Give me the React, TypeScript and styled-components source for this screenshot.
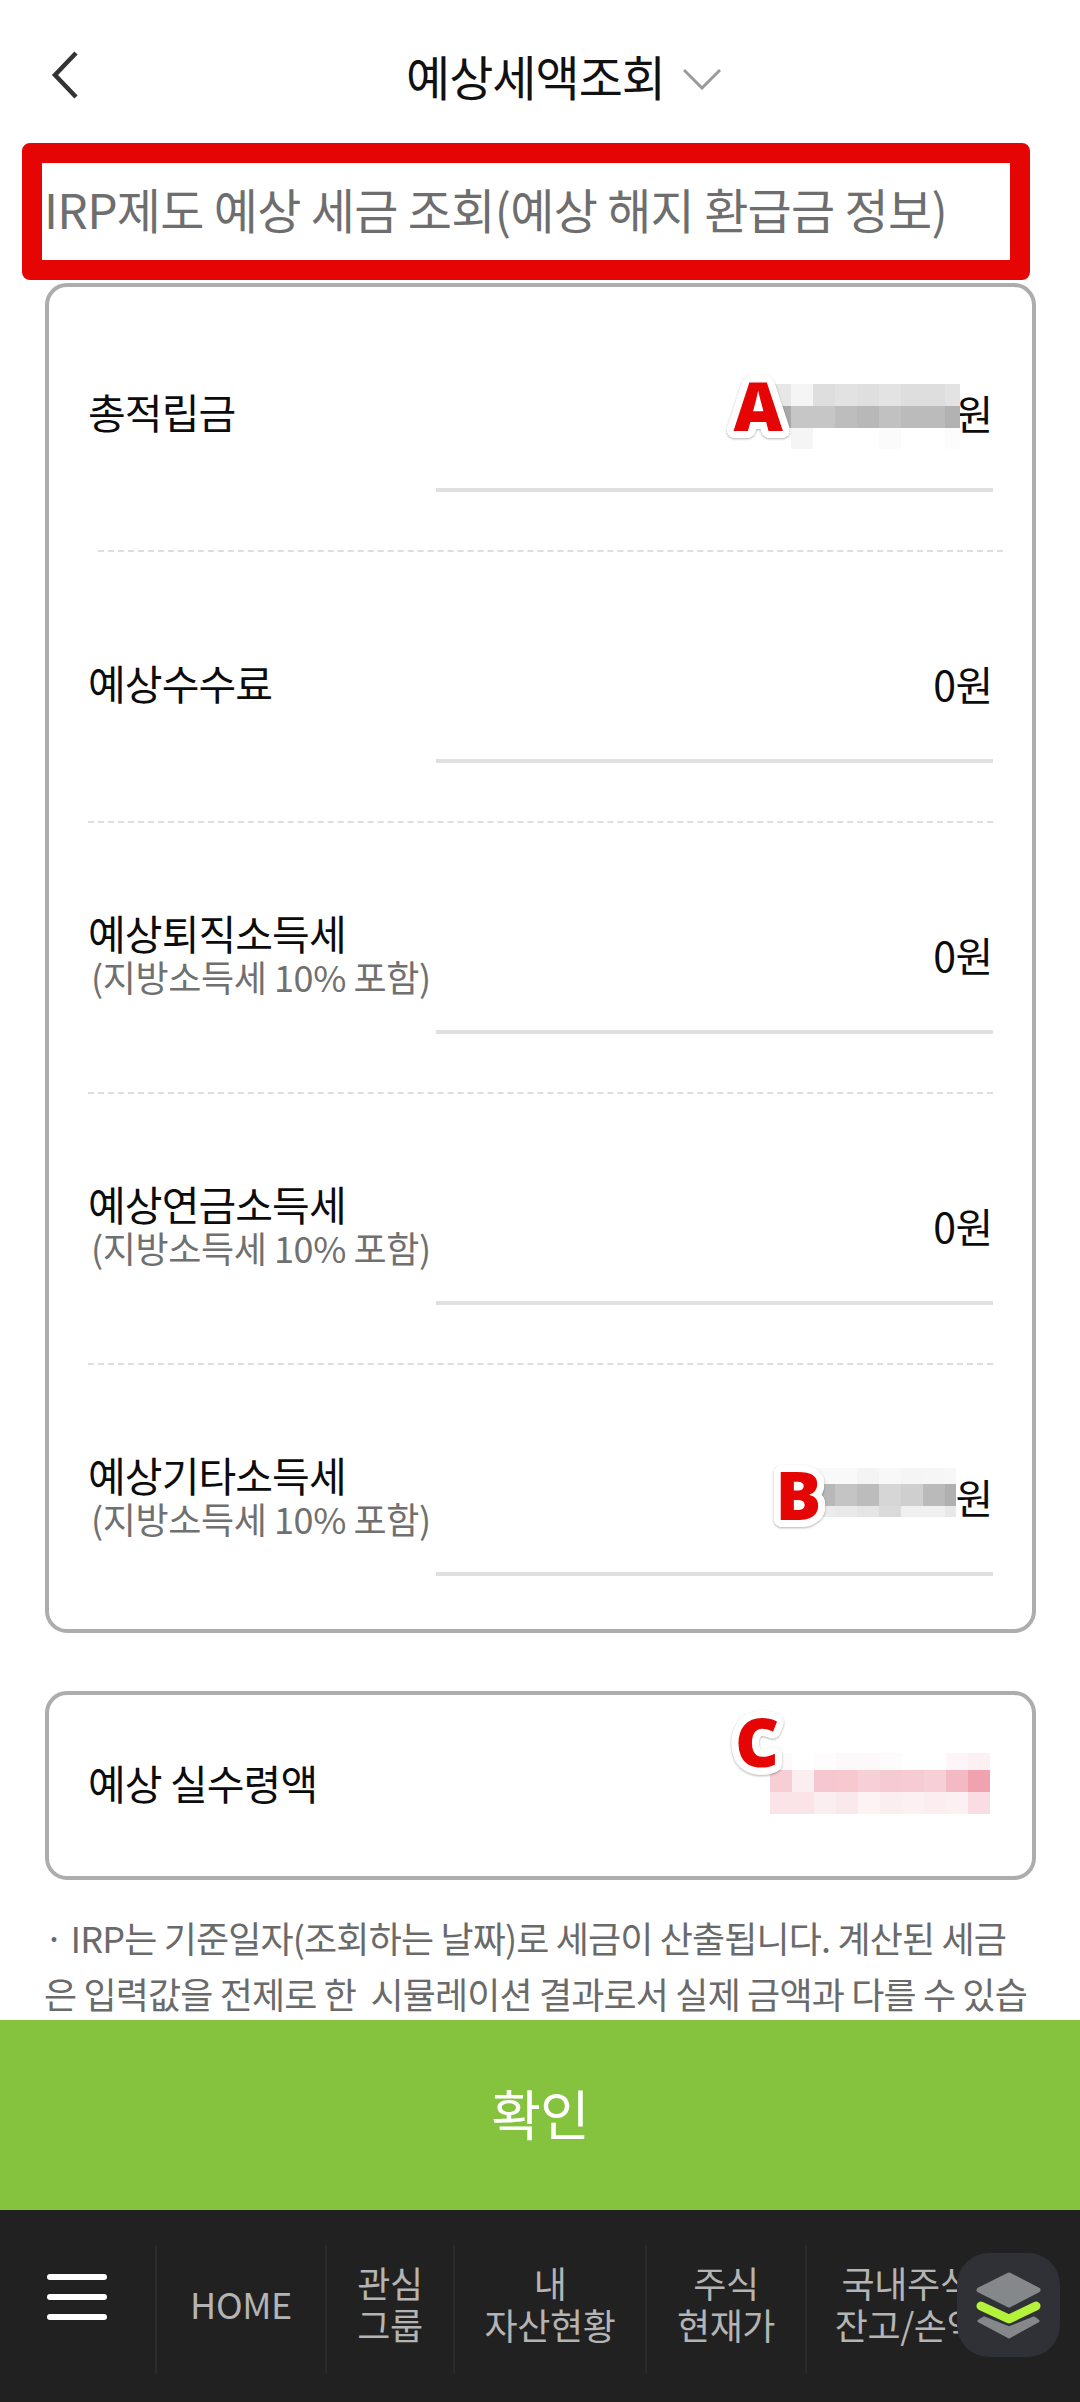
// App.tsx
import React from 'react';
import styled, { createGlobalStyle } from 'styled-components';

const GlobalStyle = createGlobalStyle`
  html, body {
    margin: 0;
    padding: 0;
    background: #fff;
  }
  * {
    box-sizing: border-box;
  }
`;

const Page = styled.div`
  width: 1080px;
  height: 2402px;
  display: flex;
  flex-direction: column;
  overflow: hidden;
  position: relative;
  background: #fff;
  font-family: 'Noto Sans CJK KR', 'Noto Sans', sans-serif;
`;

const Scroll = styled.div`
  flex: 1;
  min-height: 0;
  overflow: hidden;
`;

const Header = styled.div`
  height: 143px;
  padding: 7px 0 0 51px;
  display: flex;
  align-items: center;
`;

const TitleGroup = styled.div`
  margin-left: 327px;
  display: flex;
  align-items: center;
  gap: 18px;
`;

const Title = styled.div`
  font-size: 48px;
  line-height: 60px;
  letter-spacing: -1px;
  color: #111;
  white-space: nowrap;
`;

const RedBox = styled.div`
  width: 1008px;
  height: 137px;
  margin-left: 22px;
  border: solid #e60505;
  border-width: 20px;
  border-radius: 8px;
  display: flex;
  align-items: center;
`;

const RedBoxText = styled.div`
  margin: 0 0 8px 2px;
  font-size: 48px;
  letter-spacing: -0.7px;
  color: #6e6e6e;
  white-space: nowrap;
`;

const Card = styled.div`
  width: 991px;
  margin: 3px 0 0 45px;
  border: 4px solid #adadad;
  border-radius: 22px;
`;

const Row = styled.div<{ $top: number; $bottom?: number }>`
  padding: ${(p) => p.$top}px 39px ${(p) => p.$bottom ?? 58}px;
`;

const RowMain = styled.div`
  height: 100px;
  display: flex;
  justify-content: space-between;
  align-items: center;
`;

const LabelBox = styled.div`
  display: flex;
  flex-direction: column;
`;

const Label = styled.div`
  margin-bottom: 3px;
  font-size: 41px;
  line-height: 44px;
  letter-spacing: -0.9px;
  color: #0c0c0c;
  white-space: nowrap;
`;

const SubLabel = styled.div`
  margin: -3px 0 0 3px;
  font-size: 36px;
  line-height: 44px;
  letter-spacing: -0.4px;
  color: #707070;
  white-space: nowrap;
`;

const Value = styled.div`
  display: flex;
  align-items: center;
  font-size: 41px;
  letter-spacing: -0.3px;
  color: #0c0c0c;
  white-space: nowrap;
`;

const Underline = styled.div`
  width: 557px;
  height: 4px;
  margin: 26px 0 0 auto;
  background: #e0e0e0;
`;

const Divider = styled.div<{ $shift?: number }>`
  height: 0;
  margin: 0 ${(p) => 39 - (p.$shift ?? 0)}px 0 ${(p) => 39 + (p.$shift ?? 0)}px;
  border-top: 2px dashed #dedede;
`;

const ResultCard = styled.div`
  width: 991px;
  height: 189px;
  margin: 58px 0 0 45px;
  padding: 0 42px 4px 39px;
  border: 4px solid #adadad;
  border-radius: 22px;
  display: flex;
  justify-content: space-between;
  align-items: center;
`;

const Note = styled.div`
  margin: 29px 0 0 44px;
  font-size: 36px;
  line-height: 56px;
  letter-spacing: -0.85px;
  color: #6a6a6a;
  white-space: pre;
`;

const Mosaic = styled.div<{ $cols: string; $rows: string; $top?: number; $right?: number }>`
  position: relative;
  display: grid;
  grid-template-columns: ${(p) => p.$cols};
  grid-template-rows: ${(p) => p.$rows};
  margin-top: ${(p) => p.$top ?? 0}px;
  margin-right: ${(p) => p.$right ?? 0}px;
`;

const MosaicCell = styled.div<{ $color: string }>`
  background: ${(p) => p.$color};
`;

// round white outline round the red marker letters
const outline = Array.from({ length: 24 }, (_, i) => {
  const a = (i / 24) * Math.PI * 2;
  return `${(Math.cos(a) * 7).toFixed(1)}px ${(Math.sin(a) * 7).toFixed(1)}px 0 #fff`;
}).join(', ');

const Annotation = styled.span<{ $left: number; $top: number }>`
  position: absolute;
  left: ${(p) => p.$left}px;
  top: ${(p) => p.$top}px;
  font-family: 'Open Sans', 'Liberation Sans', sans-serif;
  font-weight: 800;
  font-size: 68px;
  line-height: 1;
  color: #e60505;
  text-shadow: ${outline};
  filter: drop-shadow(0 1px 1px rgba(0, 0, 0, 0.3));
`;

const ConfirmButton = styled.button`
  flex: none;
  height: 190px;
  width: 100%;
  padding: 0 0 6px;
  border: none;
  background: #85c33e;
  color: #fff;
  font-family: inherit;
  font-size: 54px;
  letter-spacing: -1px;
`;

const Nav = styled.nav`
  flex: none;
  height: 192px;
  padding-top: 35px;
  display: flex;
  align-items: flex-start;
  overflow: hidden;
  background: #212121;
`;

const MenuButton = styled.div`
  flex: none;
  width: 155px;
  height: 128px;
  padding: 29px 0 0 47px;
  display: flex;
  flex-direction: column;
  gap: 14px;
`;

const MenuLine = styled.span`
  display: block;
  width: 60px;
  height: 6px;
  border-radius: 3px;
  background: #fff;
`;

const NavItem = styled.div<{ $width: number }>`
  flex: none;
  width: ${(p) => p.$width}px;
  height: 128px;
  padding-bottom: 12px;
  border-left: 2px solid #2c2c2c;
  display: flex;
  align-items: center;
  justify-content: center;
  text-align: center;
  font-size: 36px;
  line-height: 42px;
  letter-spacing: -0.4px;
  color: #b4b4b4;
  white-space: pre;
`;

const FloatButton = styled.div`
  position: absolute;
  left: 957px;
  top: 2253px;
  width: 103px;
  height: 104px;
  border-radius: 32px;
  background: #2f3136;
`;

const mosaicA = [
  ['#e7e7e7', '#f5f5f5', '#dedede', '#e2e2e2', '#dfdfdf', '#e3e3e3', '#dedede', '#dedede', '#e3e3e3'],
  ['#a8a8a8', '#c6c6c6', '#c6c6c6', '#bdbdbd', '#b8b8b8', '#c1c1c1', '#bbbbbb', '#bbbbbb', '#b2b2b2'],
  ['#ffffff', '#f5f5f5', '#ffffff', '#ffffff', '#ffffff', '#fbfbfb', '#ffffff', '#ffffff', '#fcfcfc'],
];

const mosaicB = [
  ['#f9f9f9', '#f9f9f9', '#f4f4f4', '#f8f8f8', '#f5f5f5', '#f6f6f6', '#f7f7f7'],
  ['#b8b8b8', '#c4c4c4', '#bcbcbc', '#d6d6d6', '#cfcfcf', '#bababa', '#b0b0b0'],
  ['#ebebeb', '#e9e9e9', '#e5e5e5', '#dadada', '#f0f0f0', '#f0f0f0', '#e8e8e8'],
];

const mosaicC = [
  ['#fdfafb', '#ffffff', '#fefcfd', '#fdf9fa', '#fdf8fa', '#fefbfc', '#ffffff', '#ffffff', '#fdf5f7', '#fcf0f2'],
  ['#f7ced6', '#fbeef0', '#f6c7d0', '#f6c9d1', '#f6d0d6', '#f6cad2', '#f6cbd3', '#f6d0d6', '#f4bac4', '#f0a3af'],
  ['#fae4e8', '#fae4e8', '#fbeef0', '#fae9ec', '#fdf3f5', '#fbeef0', '#fcf0f2', '#fbedf0', '#fcf0f3', '#fadde3'],
];

const Cells: React.FC<{ data: string[][] }> = ({ data }) => (
  <>
    {data.flat().map((color, i) => (
      <MosaicCell key={i} $color={color} />
    ))}
  </>
);

const sub = '(지방소득세 10% 포함)';

const App: React.FC = () => {
  return (
    <Page>
      <GlobalStyle />
      <Scroll>
        <Header>
          <svg width="28" height="48" viewBox="0 0 28 48" fill="none">
            <path d="M25 2 L4 24 L25 46" stroke="#333" strokeWidth="4.5" />
          </svg>
          <TitleGroup>
            <Title>예상세액조회</Title>
            <svg width="38" height="22" viewBox="0 0 38 22" fill="none" style={{ marginTop: 8 }}>
              <path d="M1 2 L19 20 L37 2" stroke="#9a9a9a" strokeWidth="3" />
            </svg>
          </TitleGroup>
        </Header>

        <RedBox>
          <RedBoxText>IRP제도 예상 세금 조회(예상 해지 환급금 정보)</RedBoxText>
        </RedBox>

        <Card>
          <Row $top={75}>
            <RowMain>
              <Label>총적립금</Label>
              <Value>
                <Mosaic $cols="repeat(8, 22px) 15px" $rows="22px 22px 21px" $top={8} $right={-4}>
                  <Cells data={mosaicA} />
                  <Annotation $left={-35} $top={-13}>A</Annotation>
                </Mosaic>
                원
              </Value>
            </RowMain>
            <Underline />
          </Row>
          <Divider $shift={10} />
          <Row $top={81}>
            <RowMain>
              <Label>예상수수료</Label>
              <Value>0원</Value>
            </RowMain>
            <Underline />
          </Row>
          <Divider />
          <Row $top={81}>
            <RowMain>
              <LabelBox>
                <Label>예상퇴직소득세</Label>
                <SubLabel>{sub}</SubLabel>
              </LabelBox>
              <Value>0원</Value>
            </RowMain>
            <Underline />
          </Row>
          <Divider />
          <Row $top={81}>
            <RowMain>
              <LabelBox>
                <Label>예상연금소득세</Label>
                <SubLabel>{sub}</SubLabel>
              </LabelBox>
              <Value>0원</Value>
            </RowMain>
            <Underline />
          </Row>
          <Divider />
          <Row $top={81} $bottom={53}>
            <RowMain>
              <LabelBox>
                <Label>예상기타소득세</Label>
                <SubLabel>{sub}</SubLabel>
              </LabelBox>
              <Value>
                <Mosaic $cols="repeat(6, 22px) 11px" $rows="16px 22px 11px" $top={-7}>
                  <Cells data={mosaicB} />
                  <Annotation $left={-37} $top={-8}>B</Annotation>
                </Mosaic>
                원
              </Value>
            </RowMain>
            <Underline />
          </Row>
        </Card>

        <ResultCard>
          <Label>예상 실수령액</Label>
          <Mosaic $cols="repeat(10, 22px)" $rows="17px 22px 22px">
            <Cells data={mosaicC} />
            <Annotation $left={-35} $top={-46}>C</Annotation>
          </Mosaic>
        </ResultCard>

        <Note>
          {'· IRP는 기준일자(조회하는 날짜)로 세금이 산출됩니다. 계산된 세금\n은 입력값을 전제로 한  시뮬레이션 결과로서 실제 금액과 다를 수 있습\n니다.'}
        </Note>
      </Scroll>

      <ConfirmButton>확인</ConfirmButton>

      <Nav>
        <MenuButton>
          <MenuLine />
          <MenuLine />
          <MenuLine />
        </MenuButton>
        <NavItem $width={170}>HOME</NavItem>
        <NavItem $width={128}>{'관심\n그룹'}</NavItem>
        <NavItem $width={192}>{'내\n자산현황'}</NavItem>
        <NavItem $width={160}>{'주식\n현재가'}</NavItem>
        <NavItem $width={202}>{'국내주식\n잔고/손익'}</NavItem>
      </Nav>

      <FloatButton>
        <svg width="103" height="104" viewBox="0 0 103 104">
          <path d="M52 22 L81 37 L52 52 L22 37 Z" fill="#85888a" stroke="#85888a" strokeWidth="5" strokeLinejoin="round" />
          <path d="M24 53 L52 66 L79 53" fill="none" stroke="#b4f23c" strokeWidth="9" strokeLinecap="round" strokeLinejoin="round" />
          <path d="M27 65 L52 75 L77 65 L81 68 L52 84 L22 68 Z" fill="#85888a" stroke="#85888a" strokeWidth="3" strokeLinejoin="round" />
        </svg>
      </FloatButton>
    </Page>
  );
};

export default App;
